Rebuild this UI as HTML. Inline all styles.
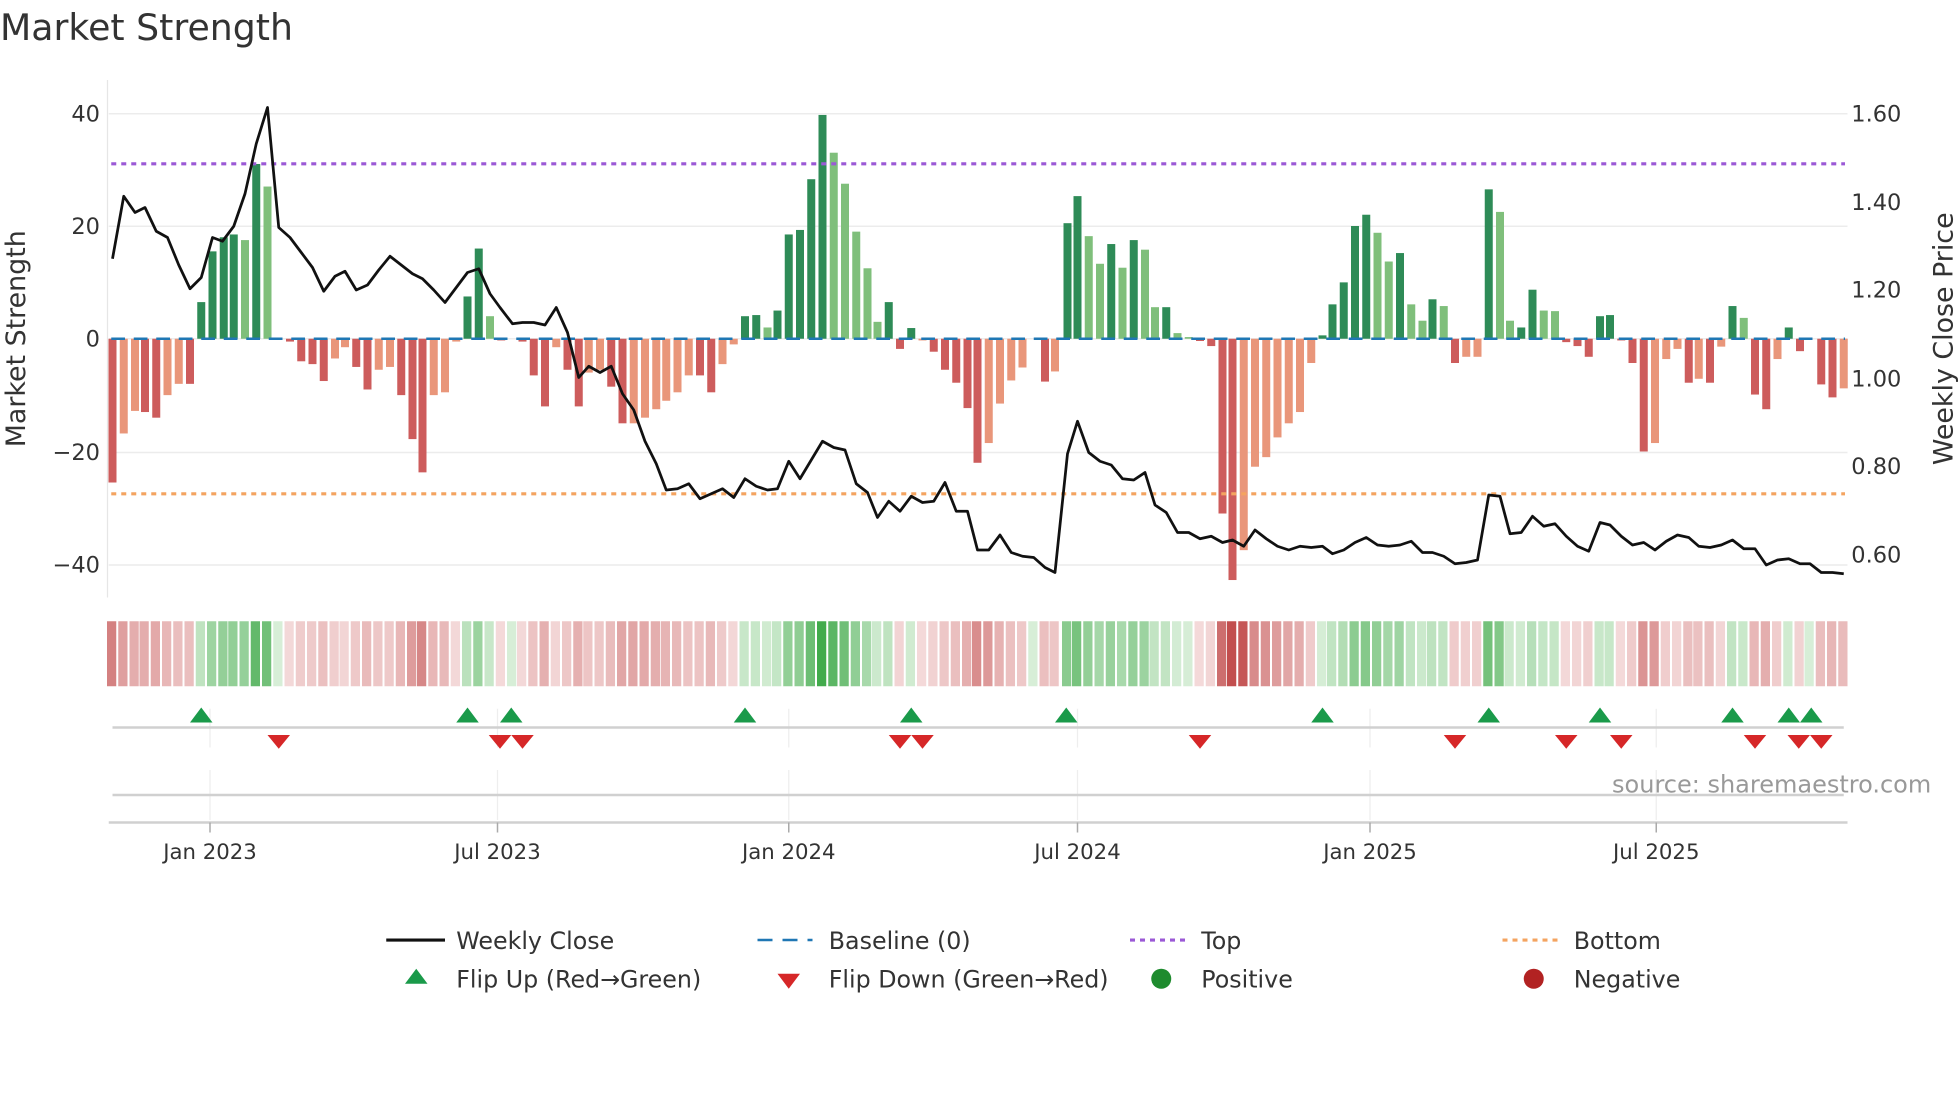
<!DOCTYPE html>
<html><head><meta charset="utf-8">
<style>
html,body{margin:0;padding:0;background:#fff;}
svg{display:block;font-family:"DejaVu Sans","Liberation Sans",sans-serif;}
</style></head>
<body>
<svg id="c" width="1960" height="1102" viewBox="0 0 1568 881.6" xmlns="http://www.w3.org/2000/svg">
<rect width="1568" height="882" fill="#fff"/>
<text x="0" y="32" font-size="29" fill="#333">Market Strength</text>
<g stroke="#ececec" stroke-width="1.2">
<line x1="87" y1="91" x2="1478" y2="91"/>
<line x1="87" y1="181" x2="1478" y2="181"/>
<line x1="87" y1="271" x2="1478" y2="271"/>
<line x1="87" y1="362" x2="1478" y2="362"/>
<line x1="87" y1="452" x2="1478" y2="452"/>
</g>
<line x1="86" y1="64" x2="86" y2="478" stroke="#e6e6e6" stroke-width="1"/>
<g font-size="18" fill="#333" text-anchor="end">
<text x="80" y="97">40</text><text x="80" y="187">20</text><text x="80" y="277">0</text>
<text x="80" y="368">−20</text><text x="80" y="458">−40</text>
</g>
<g font-size="18" fill="#333">
<text x="1481" y="97">1.60</text><text x="1481" y="168">1.40</text><text x="1481" y="238">1.20</text>
<text x="1481" y="309">1.00</text><text x="1481" y="379">0.80</text><text x="1481" y="450">0.60</text>
</g>
<text transform="translate(20,271) rotate(-90)" font-size="21.5" fill="#333" text-anchor="middle">Market Strength</text>
<text transform="translate(1562,271) rotate(-90)" font-size="21.5" fill="#333" text-anchor="middle">Weekly Close Price</text>
<g id="bars"></g>
<line x1="89" y1="271" x2="1476" y2="271" stroke="#1f77b4" stroke-width="2" stroke-dasharray="11,7"/>
<line x1="89" y1="131" x2="1476" y2="131" stroke="#9b59d6" stroke-width="2.5" stroke-dasharray="4,4"/>
<line x1="89" y1="395" x2="1476" y2="395" stroke="#f4a460" stroke-width="2.5" stroke-dasharray="4,4"/>
<polyline id="price" fill="none" stroke="#111" stroke-width="2.2" stroke-linejoin="round"/>
<g id="heat"></g>
<g stroke="#eeeeee" stroke-width="1">
<line x1="168" y1="567" x2="168" y2="598"/><line x1="398" y1="567" x2="398" y2="598"/><line x1="631" y1="567" x2="631" y2="598"/><line x1="862" y1="567" x2="862" y2="598"/><line x1="1096" y1="567" x2="1096" y2="598"/><line x1="1325" y1="567" x2="1325" y2="598"/>
<line x1="168" y1="616" x2="168" y2="656"/><line x1="398" y1="616" x2="398" y2="656"/><line x1="631" y1="616" x2="631" y2="656"/><line x1="862" y1="616" x2="862" y2="656"/><line x1="1096" y1="616" x2="1096" y2="656"/><line x1="1325" y1="616" x2="1325" y2="656"/>
</g>
<line x1="90" y1="582" x2="1475" y2="582" stroke="#d0d0d0" stroke-width="2"/>
<line x1="90" y1="636" x2="1475" y2="636" stroke="#d0d0d0" stroke-width="2"/>
<line x1="87" y1="658" x2="1478" y2="658" stroke="#d0d0d0" stroke-width="2"/>
<g stroke="#aaa" stroke-width="1.2">
<line x1="168" y1="658" x2="168" y2="666"/><line x1="398" y1="658" x2="398" y2="666"/><line x1="631" y1="658" x2="631" y2="666"/><line x1="862" y1="658" x2="862" y2="666"/><line x1="1096" y1="658" x2="1096" y2="666"/><line x1="1325" y1="658" x2="1325" y2="666"/>
</g>
<g id="marks"></g>
<text x="1545" y="634" font-size="19.2" fill="#999" text-anchor="end">source: sharemaestro.com</text>
<g font-size="17" fill="#333" text-anchor="middle">
<text x="168" y="687">Jan 2023</text><text x="398" y="687">Jul 2023</text><text x="631" y="687">Jan 2024</text>
<text x="862" y="687">Jul 2024</text><text x="1096" y="687">Jan 2025</text><text x="1325" y="687">Jul 2025</text>
</g>
<line x1="309" y1="752" x2="356" y2="752" stroke="#111" stroke-width="2.5"/>
<line x1="606" y1="752" x2="650" y2="752" stroke="#1f77b4" stroke-width="2" stroke-dasharray="12,8"/>
<line x1="904" y1="752" x2="948" y2="752" stroke="#9b59d6" stroke-width="2.5" stroke-dasharray="4,4"/>
<line x1="1202" y1="752" x2="1248" y2="752" stroke="#f4a460" stroke-width="2.5" stroke-dasharray="4,4"/>
<polygon points="324,787 342,787 333,775" fill="#1a9a4a"/>
<polygon points="622,779 640,779 631,791" fill="#d62728"/>
<circle cx="929" cy="783" r="8" fill="#1e8b2e"/>
<circle cx="1227" cy="783" r="8" fill="#b22222"/>
<g font-size="19" fill="#333">
<text x="365" y="759">Weekly Close</text><text x="663" y="759">Baseline (0)</text><text x="961" y="759">Top</text><text x="1259" y="759">Bottom</text>
<text x="365" y="790">Flip Up (Red→Green)</text><text x="663" y="790">Flip Down (Green→Red)</text><text x="961" y="790">Positive</text><text x="1259" y="790">Negative</text>
</g>
</svg>
<script>
var B="90 -25.5D,99 -16.8L,108 -12.8L,116 -13D,125 -14D,134 -10L,143 -8L,152 -8D,161 6.5D,170 15.5D,179 18D,187 18.5D,196 17.5L,205 31D,214 27L,223 0L,232 -0.5D,241 -4D,250 -4.5D,259 -7.5D,268 -3.5L,276 -1.5L,285 -5D,294 -9D,303 -5.5L,312 -5L,321 -10D,330 -17.8D,338 -23.7D,347 -10L,356 -9.5L,365 -0.5L,374 7.5D,383 16D,392 4L,401 -0.3D,410 0L,418 -0.5D,427 -6.5D,436 -12D,445 -1.5L,454 -5.5D,463 -12D,471 -6L,480 -5.5L,489 -8.5D,498 -15D,507 -15L,516 -14L,525 -12.5L,533 -11L,542 -9.5L,551 -6.5L,560 -6.5D,569 -9.5D,578 -4.5L,587 -1L,596 4D,605 4.2D,614 2L,622 5D,631 18.5D,640 19.3D,649 28.3D,658 39.7D,667 33L,676 27.5L,685 19L,694 12.5L,702 3L,711 6.5D,720 -1.8D,729 1.9D,738 -0.3L,747 -2.3D,756 -5.5D,765 -7.8D,774 -12.3D,782 -22D,791 -18.5L,800 -11.5L,809 -7.4L,818 -5.1L,827 0L,836 -7.6D,844 -5.8L,854 20.5D,862 25.3D,871 18.2L,880 13.3L,889 16.8D,898 12.6L,907 17.5D,916 15.8L,924 5.6L,933 5.6D,942 1L,951 0.3L,960 -0.4D,969 -1.3D,978 -31D,986 -42.8D,995 -37.5L,1004 -22.7L,1013 -21L,1022 -17.5L,1031 -15L,1040 -13L,1049 -4.3L,1058 0.6D,1066 6.1D,1075 10D,1084 20D,1093 22D,1102 18.8L,1111 13.7L,1120 15.2D,1129 6.1L,1138 3.2L,1146 7D,1155 5.8L,1164 -4.3D,1173 -3.2L,1182 -3.2L,1191 26.5D,1200 22.5L,1208 3.2L,1217 2D,1226 8.7D,1235 5L,1244 4.9L,1253 -0.6D,1262 -1.3D,1271 -3.2D,1280 4D,1288 4.2D,1297 -0.3D,1306 -4.3D,1315 -20D,1324 -18.5L,1333 -3.6L,1342 -1.8L,1351 -7.8D,1359 -7.1L,1368 -7.8D,1377 -1.4L,1386 5.8D,1395 3.7L,1404 -9.9D,1413 -12.5D,1422 -3.6L,1431 2D,1440 -2.2D,1448 0L,1457 -8.1D,1466 -10.4D,1475 -8.8L";
var NS="http://www.w3.org/2000/svg";
function el(t,a,p){var e=document.createElementNS(NS,t);for(var k in a)e.setAttribute(k,a[k]);p.appendChild(e);return e;}
var bars=document.getElementById('bars'),heat=document.getElementById('heat');
B.split(',').forEach(function(s){
 var p=s.split(' ');var x=+p[0];var dk=p[1].slice(-1)=='D';var v=parseFloat(p[1]);
 var y0=271,y1=271-v*4.51;
 var col=v>=0?(dk?'#2e8b57':'#7fbf7b'):(dk?'#cd5c5c':'#e9967a');
 if(Math.abs(v)>0.05) el('rect',{x:x-3.2,y:Math.min(y0,y1),width:6.4,height:Math.abs(y1-y0),fill:col},bars);
 var a=Math.min(Math.abs(v)/40,1);
 var c;
 if(v>=0){var r=Math.round(215-a*150),g=Math.round(238-a*68),b=Math.round(215-a*140);c='rgb('+r+','+g+','+b+')';}
 else{var r=Math.round(244-a*50),g=Math.round(218-a*140),b=Math.round(218-a*140);c='rgb('+r+','+g+','+b+')';}
 el('rect',{x:x-4.4,y:497,width:7.4,height:52,fill:c},heat);
});
var P="90,207 99,157 108,170 116,166 125,185 134,190 143,212 152,231 161,222 170,190 178,193 187,181 196,155 205,115 214,86 223,182 232,190 241,202 250,214 259,233 268,221 276,217 285,232 294,228 303,216 312,205 321,212 330,219 338,223 347,232 356,242 365,230 374,218 383,215 392,235 400,246 410,259 418,258 427,258 436,260 445,246 454,266 463,302 471,293 480,298 489,293 498,315 507,328 516,353 525,371 533,392 542,391 551,387 560,399 569,395 578,391 587,398 596,383 605,389 614,392 622,391 631,369 640,383 649,368 658,353 667,358 676,360 685,387 694,394 702,414 711,401 720,409 729,397 738,402 747,401 756,386 765,409 774,409 782,440 791,440 800,428 809,442 818,445 827,446 836,454 844,458 854,363 862,337 871,362 880,369 889,372 898,383 907,384 916,378 924,404 933,410 942,426 951,426 960,431 969,429 978,434 986,432 995,437 1004,424 1013,431 1022,437 1031,440 1040,437 1049,438 1058,437 1066,443 1075,440 1084,434 1093,430 1102,436 1111,437 1120,436 1129,433 1138,442 1146,442 1155,445 1164,451 1173,450 1182,448 1191,396 1200,397 1208,427 1217,426 1226,413 1235,421 1244,419 1253,429 1262,437 1271,441 1280,418 1288,420 1297,429 1306,436 1315,434 1324,440 1333,433 1342,428 1351,430 1359,437 1368,438 1377,436 1386,432 1395,439 1404,439 1413,452 1422,448 1431,447 1440,451 1448,451 1457,458 1466,458 1475,459";
document.getElementById('price').setAttribute('points',P);
var m=document.getElementById('marks');
[161,374,409,596,729,853,1058,1191,1280,1386,1431,1449].forEach(function(x){el('polygon',{points:(x-9)+',578 '+(x+9)+',578 '+x+',566',fill:'#1a9a4a'},m);});
[223,400,418,720,738,960,1164,1253,1297,1404,1439,1457].forEach(function(x){el('polygon',{points:(x-9)+',588 '+(x+9)+',588 '+x+',599',fill:'#d62728'},m);});
</script>
</body></html>
